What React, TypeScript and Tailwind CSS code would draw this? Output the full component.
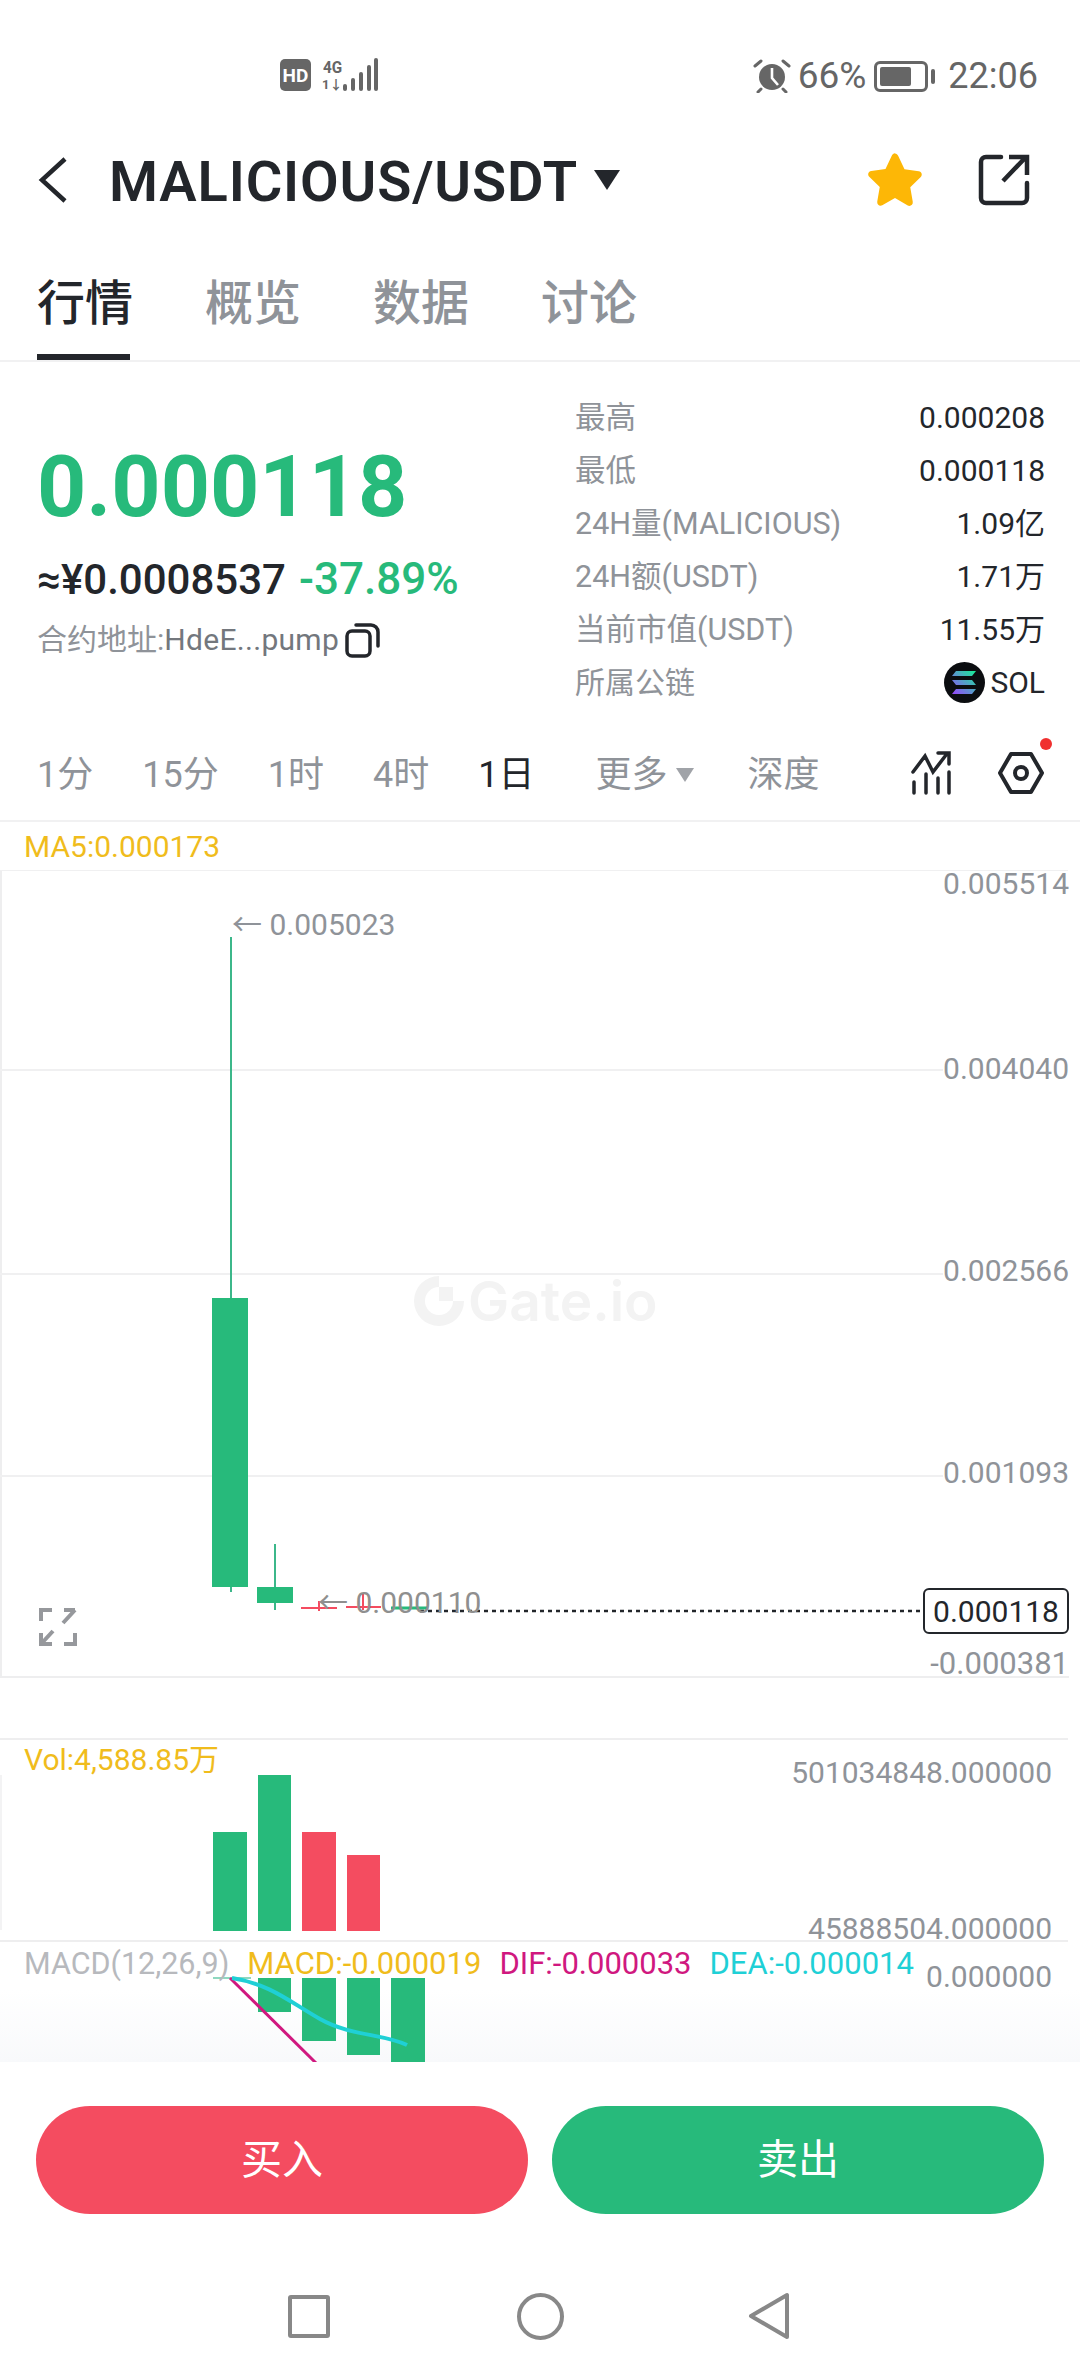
const GREEN = '#27ba7b'
const RED = '#f44c60'

const stats = [
  { label: '最高', value: '0.000208' },
  { label: '最低', value: '0.000118' },
  { label: '24H量(MALICIOUS)', value: '1.09亿' },
  { label: '24H额(USDT)', value: '1.71万' },
  { label: '当前市值(USDT)', value: '11.55万' },
]

const volBars = [
  { x: 213, top: 1775 + 57, w: 34, color: GREEN },
  { x: 258, top: 1775, w: 33, color: GREEN },
  { x: 302, top: 1775 + 57, w: 34, color: RED },
  { x: 347, top: 1855, w: 33, color: RED },
]

const macdBars = [
  { x: 258, bottom: 2013, w: 33 },
  { x: 302, bottom: 2042, w: 34 },
  { x: 347, bottom: 2056, w: 33 },
  { x: 391, bottom: 2064, w: 34 },
]

function StatusBar() {
  return (
    <div className="flex h-[120px] items-start pt-[59px] text-[#666666]">
      <div className="ml-[280px] flex h-[32px] w-[31px] items-center justify-center rounded-[5px] bg-[#666666] text-[19px] font-bold leading-none text-white">
        HD
      </div>
      <div className="ml-[11px] flex h-[32px] flex-col justify-between text-[17px] font-bold leading-none">
        <span className="scale-x-90">4G</span>
        <span className="text-[13px]">1↓</span>
      </div>
      <svg width="36" height="34" viewBox="0 0 36 34" className="-mt-[1px] -ml-[1px]">
        <g fill="#666666">
          <rect x="1" y="26" width="4" height="7" rx="2" />
          <rect x="9" y="20" width="4" height="13" rx="2" />
          <rect x="17" y="14" width="4" height="19" rx="2" />
          <rect x="25" y="7" width="4" height="26" rx="2" />
          <rect x="32" y="0" width="4" height="33" rx="2" />
        </g>
      </svg>
      <div className="ml-auto mr-[42px] flex items-center">
        <svg width="38" height="34" viewBox="0 0 38 34">
          <circle cx="19" cy="18" r="13" fill="#666666" />
          <path d="M19 9v10l6 7" fill="none" stroke="#fff" strokeWidth="2.6" />
          <path d="M2 7l6-5M36 7l-6-5M8 30l-3 3M30 30l3 3" stroke="#666666" strokeWidth="3" strokeLinecap="round" />
        </svg>
        <span className="ml-[7px] text-[37px] leading-[32px]">66%</span>
        <div className="ml-[8px] flex h-[31px] w-[54px] items-center rounded-[6px] border-[3px] border-[#666666] px-[3px]">
          <div className="h-[19px] w-[31px] rounded-[2px] bg-[#666666]" />
        </div>
        <div className="ml-[3px] h-[15px] w-[4px] rounded-full bg-[#666666]" />
        <span className="ml-[13px] text-[36px] leading-[32px]">22:06</span>
      </div>
    </div>
  )
}

function Header() {
  return (
    <div className="flex h-[120px] items-center text-[#23262b]">
      <svg width="30" height="48" viewBox="0 0 30 48" className="ml-[38px]">
        <path d="M27 3L4 24l23 21" fill="none" stroke="currentColor" strokeWidth="4.5" />
      </svg>
      <span className="ml-[41px] mt-[4px] text-[56px] font-semibold leading-none tracking-[0.85px]">MALICIOUS/USDT</span>
      <svg width="28" height="22" viewBox="0 0 28 22" className="ml-[15px]">
        <path d="M1 1h26L14 21z" fill="currentColor" />
      </svg>
      <svg width="60" height="60" viewBox="0 0 24 24" className="-mt-[4px] ml-auto">
        <path
          d="M12 2.2c.6 0 1 .4 1.3 1l2.5 5.3 5.7.8c1.2.2 1.6 1.5.8 2.3l-4.2 4.1 1 5.8c.2 1.200-1 2-2 1.500L12 20l-5.100 2.900c-1 .6-2.200-.3-2-1.500l1-5.800-4.200-4.100c-.8-.8-.4-2.100.8-2.300l5.700-.8 2.500-5.300c.3-.6.700-1 1.300-1z"
          fill="#fdb706"
        />
      </svg>
      <svg width="52" height="52" viewBox="0 0 52 52" className="ml-[53px] mr-[50px]">
        <path
          d="M23 3H8a5 5 0 0 0-5 5v36a5 5 0 0 0 5 5h36a5 5 0 0 0 5-5V29"
          fill="none"
          stroke="currentColor"
          strokeWidth="4.500"
          strokeLinecap="round"
        />
        <path d="M25 27L47 4M31 3h18v18" fill="none" stroke="currentColor" strokeWidth="4.500" />
      </svg>
    </div>
  )
}

function Tabs() {
  return (
    <div className="flex h-[122px] gap-[72px] border-b-2 border-[#f1f1f2] pl-[37px] text-[48px] font-medium">
      <div className="relative">
        <span className="block pt-[36px] leading-[56px] text-[#23262b]">行情</span>
        <div className="absolute bottom-0 h-[6px] w-[93px] bg-[#23262b]" />
      </div>
      {['概览', '数据', '讨论'].map(tab => (
        <span key={tab} className="pt-[36px] leading-[56px] text-[#8f9399]">
          {tab}
        </span>
      ))}
    </div>
  )
}

function Summary() {
  return (
    <div className="flex h-[379px]">
      <div className="w-[575px] pl-[37px]">
        <div className="mt-[75px] text-[86px] font-bold leading-[100px] text-[#27ba7b]">0.000118</div>
        <div className="mt-[18px] flex items-baseline leading-[48px]">
          <span className="text-[42px] font-medium text-[#23262b]">≈¥0.0008537</span>
          <span className="ml-[13px] text-[44px] font-medium text-[#27ba7b]">-37.89%</span>
        </div>
        <div className="mt-[16px] flex items-center text-[30px] leading-[40px] text-[#73777d]">
          <span className="text-[#8f9399]">合约地址:</span>
          <span className="tracking-[0.3px]">HdeE...pump</span>
          <svg width="36" height="36" viewBox="0 0 36 36" className="ml-[6px]">
            <rect x="2" y="9" width="23" height="25" rx="5" fill="none" stroke="#23262b" strokeWidth="3.500" />
            <path d="M11 3h15a7 7 0 0 1 7 7v14" fill="none" stroke="#23262b" strokeWidth="3.500" strokeLinecap="round" />
          </svg>
        </div>
      </div>
      <div className="w-[470px] pt-[29px] text-[30px]">
        {stats.map(stat => (
          <div key={stat.label} className="flex h-[53px] items-center justify-between">
            <span className="text-[30.500px] text-[#8f9399]">{stat.label}</span>
            <span className="text-[#23262b]">{stat.value}</span>
          </div>
        ))}
        <div className="flex h-[53px] items-center justify-between">
          <span className="text-[#8f9399]">所属公链</span>
          <span className="flex items-center text-[#23262b]">
            <svg width="41" height="41" viewBox="0 0 41 41" className="mr-[5px]">
              <defs>
                <linearGradient id="sol" x1="0" y1="1" x2="1" y2="0">
                  <stop offset="0" stopColor="#9945ff" />
                  <stop offset="1" stopColor="#14f195" />
                </linearGradient>
              </defs>
              <circle cx="20.500" cy="20.500" r="20.500" fill="#0b0d10" />
              <path d="M12 9h20l-4 5H8zM8 18h20l4 5H12zM12 27h20l-4 5H8z" fill="url(#sol)" />
            </svg>
            SOL
          </span>
        </div>
      </div>
    </div>
  )
}

function TimeBar() {
  return (
    <div className="flex h-[81px] items-center border-b-2 border-[#f1f1f2] pb-[12px] text-[36px] text-[#8f9399]">
      <div className="ml-[37px] flex gap-[49px]">
        <span>1分</span>
        <span>15分</span>
        <span>1时</span>
        <span>4时</span>
        <span className="text-[#23262b]">1日</span>
      </div>
      <span className="ml-[61px]">更多</span>
      <svg width="18" height="16" viewBox="0 0 18 16" className="ml-[9px]">
        <path d="M0 1h18L9 15z" fill="#a0a3a8" />
      </svg>
      <span className="ml-[53px]">深度</span>
      <svg width="42" height="44" viewBox="0 0 42 44" className="-mt-[3px] ml-[92px]">
        <path
          d="M2 21L14 5l8 16L35 4M27 2h11v11M3 31v11M15 23v19M27 27v15M38 21v21"
          fill="none"
          stroke="#23262b"
          strokeWidth="3.500"
          strokeLinecap="round"
        />
      </svg>
      <div className="relative -mt-[3px] ml-[45px]">
        <svg width="46" height="44" viewBox="0 0 46 44" className="block">
          <path d="M13 3h20l11 19-11 19H13L2 22z" fill="none" stroke="#23262b" strokeWidth="4" strokeLinejoin="round" />
          <circle cx="23" cy="22" r="6" fill="none" stroke="#23262b" strokeWidth="4" />
        </svg>
        <div className="absolute -top-[13px] left-[42px] h-[12px] w-[12px] rounded-full bg-[#f0302f]" />
      </div>
    </div>
  )
}

function MainChart() {
  return (
    <div className="relative h-[808px] w-[1069px] border-b-2 border-l-2 border-[#eeeeef]">
      <svg width="1069" height="808" viewBox="0 870 1069 808" className="absolute -left-[2px] top-0">
        <g stroke="#f0f0f1" strokeWidth="2">
          <line x1="0" x2="1068" y1="870" y2="870" />
          <line x1="0" x2="1068" y1="1070" y2="1070" />
          <line x1="0" x2="1068" y1="1274" y2="1274" />
          <line x1="0" x2="1068" y1="1476" y2="1476" />
        </g>
        <path d="M231 937V1592" stroke="#3cb78a" strokeWidth="2" />
        <rect x="212" y="1298" width="36" height="289" fill={GREEN} />
        <path d="M275 1544V1610" stroke="#3cb78a" strokeWidth="2" />
        <rect x="257" y="1587" width="36" height="16" fill={GREEN} />
        <path d="M301 1608h36M319 1601v10M346 1607h35M363 1593v17" stroke={RED} strokeWidth="2" />
        <path d="M391 1608h36" stroke={GREEN} strokeWidth="3" />
        <path d="M420 1611H922" stroke="#23262b" strokeWidth="2.500" strokeDasharray="4 4" />
      </svg>

      {/* 워터마크 */}
      <div className="absolute left-[412px] top-[406px] flex items-center text-[#f3f3f3]">
        <svg width="50" height="50" viewBox="0 0 50 50">
          <path d="M25 0v11a14 14 0 1 0 14 14h11A25 25 0 1 1 25 0z" fill="currentColor" />
          <rect x="25" y="11" width="14" height="14" fill="currentColor" />
        </svg>
        <span className="ml-[4px] font-['Inter'] text-[55px] font-semibold leading-[50px]">Gate.io</span>
      </div>

      <span className="absolute left-[230px] top-[35px] text-[30px] leading-[40px] text-[#8f9399]">← 0.005023</span>
      <span className="absolute left-[316px] top-[713px] text-[30px] leading-[40px] text-[#8f8f8f]">← 0.000110</span>

      <span className="absolute right-0 top-[-6px] text-[30px] leading-[40px] text-[#8f9399]">0.005514</span>
      <span className="absolute right-0 top-[179px] bg-white text-[30px] leading-[40px] text-[#8f9399]">0.004040</span>
      <span className="absolute right-0 top-[381px] bg-white text-[30px] leading-[40px] text-[#8f9399]">0.002566</span>
      <span className="absolute right-0 top-[583px] bg-white text-[30px] leading-[40px] text-[#8f9399]">0.001093</span>
      <span className="absolute right-0 top-[774px] text-[31px] leading-[40px] text-[#8f9399]">-0.000381</span>

      <div className="absolute right-0 top-[718px] flex h-[46px] w-[146px] items-center justify-center rounded-[6px] border-2 border-[#23262b] bg-white text-[30px] text-[#23262b]">
        0.000118
      </div>

      <svg width="38" height="38" viewBox="0 0 38 38" className="absolute left-[37px] top-[738px]">
        <path
          d="M2 13V2h11M36 25v11H25M25 2h11M36 2L24 15M2 36L14 23M2 25v11h11"
          fill="none"
          stroke="#96989c"
          strokeWidth="4"
        />
      </svg>
    </div>
  )
}

function VolumeChart() {
  return (
    <div className="relative h-[204px] w-[1068px] border-t-2 border-b-2 border-[#eeeeef]">
      <div className="absolute bottom-[10px] left-0 top-[35px] w-[2px] bg-[#f3f3f4]" />
      {volBars.map(bar => (
        <div
          key={bar.x}
          className="absolute"
          style={{ left: bar.x, top: bar.top - 1740, width: bar.w, height: 1931 - bar.top, background: bar.color }}
        />
      ))}
      <span className="absolute left-[24px] top-[0px] text-[30px] leading-[40px] text-[#f0bc1c]">Vol:4,588.85万</span>
      <span className="absolute right-[16px] top-[13px] text-[30px] leading-[40px] text-[#8f9399]">501034848.000000</span>
      <span className="absolute right-[16px] top-[169px] text-[30px] leading-[40px] text-[#8f9399]">45888504.000000</span>
    </div>
  )
}

function MacdChart() {
  return (
    <div className="relative h-[120px] w-[1080px] overflow-hidden bg-gradient-to-b from-white from-40% to-[#f8f9fb]">
      {macdBars.map(bar => (
        <div
          key={bar.x}
          className="absolute top-[36px] bg-[#27ba7b]"
          style={{ left: bar.x, width: bar.w, height: bar.bottom - 1979 }}
        />
      ))}
      <svg width="1080" height="120" viewBox="0 1943 1080 120" className="absolute left-0 top-0">
        <path d="M213 1979h38" stroke="#8fd8c0" strokeWidth="2" />
        <path d="M230 1979L316 2064" stroke="#d0187f" strokeWidth="3" />
        <path d="M232 1979C270 1985 290 2003 320 2020S385 2035 407 2046" fill="none" stroke="#1fd0d6" strokeWidth="4" />
      </svg>
      <div className="absolute left-[24px] top-[2px] flex text-[31px] leading-[40px]">
        <span className="text-[30.500px] text-[#b7b9bd]">MACD(12,26,9)</span>
        <span className="ml-[18px] text-[#f0bc1c]">MACD:-0.000019</span>
        <span className="ml-[18px] text-[#d0187f]">DIF:-0.000033</span>
        <span className="ml-[18px] text-[#1fd0d6]">DEA:-0.000014</span>
      </div>
      <span className="absolute right-[28px] top-[15px] text-[30px] leading-[40px] text-[#8f9399]">0.000000</span>
    </div>
  )
}

function Footer() {
  return (
    <div className="bg-white">
      <div className="flex gap-[24px] px-[36px] pt-[44px]">
        <button className="h-[108px] flex-1 rounded-full bg-[#f44c60] pt-[2px] text-[41px] text-white">买入</button>
        <button className="h-[108px] flex-1 rounded-full bg-[#27ba7b] pt-[2px] text-[41px] text-white">卖出</button>
      </div>
      <div className="flex items-center pt-[78px]">
        <div className="ml-[288px] h-[43px] w-[42px] rounded-[3px] border-[4px] border-[#888888]" />
        <div className="ml-[187px] h-[47px] w-[47px] rounded-full border-[4px] border-[#888888]" />
        <svg width="42" height="48" viewBox="0 0 42 48" className="ml-[184px]">
          <path d="M39 3v42L3 24z" fill="none" stroke="#888888" strokeWidth="4" strokeLinejoin="round" />
        </svg>
      </div>
    </div>
  )
}

export default function App() {
  return (
    <div className="h-[2376px] w-[1080px] overflow-hidden bg-white font-['Roboto','Noto_Sans_CJK_SC',sans-serif]">
      <StatusBar />
      <Header />
      <Tabs />
      <Summary />
      <TimeBar />
      <div className="flex h-[48px] items-center pl-[24px] text-[30px] text-[#f0bc1c]">MA5:0.000173</div>
      <MainChart />
      <div className="h-[60px]" />
      <VolumeChart />
      <MacdChart />
      <Footer />
    </div>
  )
}
